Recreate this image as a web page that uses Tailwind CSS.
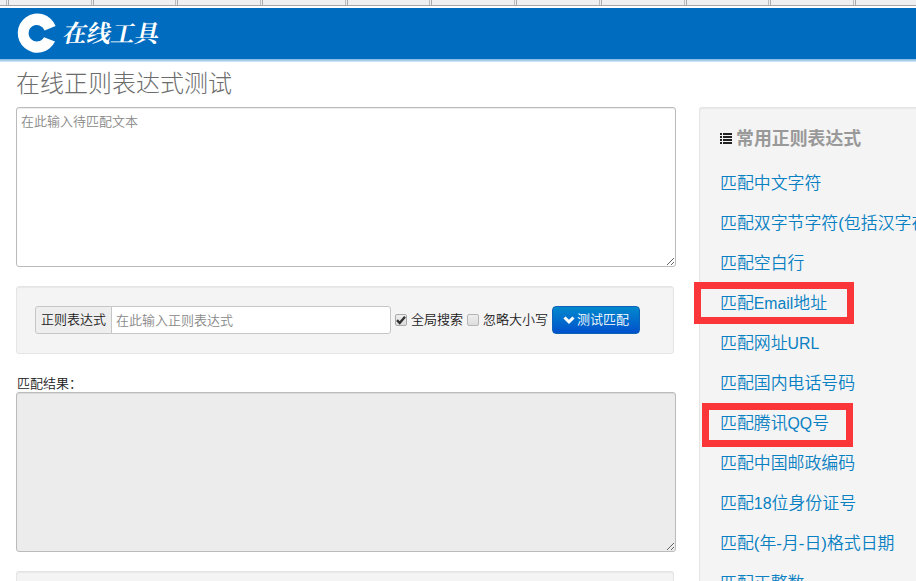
<!DOCTYPE html>
<html lang="zh-CN">
<head>
    <meta charset="UTF-8">
    <meta name="viewport" content="width=device-width, initial-scale=1.0">
    <title>在线正则表达式测试</title>
    <script src="https://cdn.jsdelivr.net/npm/@tailwindcss/browser@4"></script>
</head>
<body class="h-[581px] overflow-hidden bg-white font-['Liberation_Sans','Noto_Sans_CJK_SC',sans-serif] text-[13px] leading-5 font-[350] text-[#222]">

    <!-- Tab strip -->
    <div class="flex h-1.5 overflow-hidden border-b border-[#a5a5ab] bg-[#f0eff0]">
        <div class="w-[9px] shrink-0 border-r border-[#aaa] pr-px"><div class="h-full border-r border-[#bbb]"></div></div>
        <div class="w-[84.7px] shrink-0 border-r border-[#aaa] pr-px"><div class="h-full border-r border-[#bbb]"></div></div>
        <div class="w-[84.7px] shrink-0 border-r border-[#aaa] pr-px"><div class="h-full border-r border-[#bbb]"></div></div>
        <div class="w-[84.7px] shrink-0 border-r border-[#aaa] pr-px"><div class="h-full border-r border-[#bbb]"></div></div>
        <div class="w-[84.7px] shrink-0 border-r border-[#aaa] pr-px"><div class="h-full border-r border-[#bbb]"></div></div>
        <div class="w-[84.7px] shrink-0 border-r border-[#aaa] pr-px"><div class="h-full border-r border-[#bbb]"></div></div>
        <div class="w-[84.7px] shrink-0 border-r border-[#aaa] pr-px"><div class="h-full border-r border-[#bbb]"></div></div>
        <div class="w-[84.7px] shrink-0 border-r border-[#aaa] pr-px"><div class="h-full border-r border-[#bbb]"></div></div>
        <div class="w-[84.7px] shrink-0 border-r border-[#aaa] pr-px"><div class="h-full border-r border-[#bbb]"></div></div>
        <div class="w-[84.7px] shrink-0 border-r border-[#aaa] pr-px"><div class="h-full border-r border-[#bbb]"></div></div>
        <div class="w-[84.7px] shrink-0 border-r border-[#aaa] pr-px"><div class="h-full border-r border-[#bbb]"></div></div>
    </div>

    <!-- Header -->
    <header class="mt-0.5 flex h-[51px] items-center bg-[#006cbf] pl-4">
        <svg class="h-10 w-10 overflow-visible" viewBox="0 0 40 40" fill="#fff">
            <path d="M39.6 12A19.6 19.6 0 1 0 39 27.6L28 23.2A8.2 8.2 0 1 1 28.6 16.6Z" />
        </svg>
        <div class="mb-1 ml-2 -skew-x-12 font-['Noto_Serif_CJK_SC','Noto_Sans_CJK_SC',serif] text-2xl leading-none font-bold text-white">在线工具</div>
    </header>
    <div class="h-[3px] bg-linear-to-b from-[#78b4e3] to-[#dbeaf5]"></div>

    <main class="flex items-start pl-4">
        <!-- Left column -->
        <div class="w-[660px] shrink-0">
            <h1 class="flex h-[45px] items-center pb-px text-2xl font-light text-[#6c6c6c]">在线正则表达式测试</h1>

            <textarea class="block h-40 w-full resize rounded-[3px] border border-[#bbb] bg-white px-1 py-1 shadow-[inset_0_1px_1px_rgba(0,0,0,0.075)] placeholder:text-[#888]" placeholder="在此输入待匹配文本"></textarea>

            <form class="mt-[19px] flex h-[68px] w-[658px] items-center rounded-[3px] border border-[#e5e5e5] bg-[#f4f4f4] pl-[18px] shadow-[inset_0_1px_1px_rgba(0,0,0,0.05)]">
                <span class="flex h-7 w-[77px] items-center justify-center rounded-l-[3px] border border-[#c6c6c6] bg-[#eee]">正则表达式</span>
                <input type="text" class="-ml-px h-7 w-[280px] rounded-r-[3px] border border-[#c6c6c6] bg-white px-1 placeholder:text-[#888]" placeholder="在此输入正则表达式">
                <label class="ml-1 flex items-center whitespace-nowrap">
                    <span class="mr-1 flex h-3 w-3 items-center justify-center rounded-[2px] border border-[#aaa] bg-linear-to-b from-[#eee] to-[#ddd]">
                        <svg class="h-2.5 w-2.5" viewBox="0 0 10 10" fill="none" stroke="#333" stroke-width="2.4"><path d="M1 5.2L3.7 8L9 1.8" /></svg>
                    </span>
                    全局搜索
                </label>
                <label class="ml-1 flex items-center whitespace-nowrap">
                    <span class="mr-1 h-3 w-3 rounded-[2px] border border-[#b5b5b5] bg-linear-to-b from-[#eee] to-[#ddd]"></span>
                    忽略大小写
                </label>
                <button type="button" class="ml-1 flex h-7 w-[88px] items-center justify-center rounded border border-[#0b62b8] bg-linear-to-b from-[#0088cc] to-[#0050cc] text-white">
                    <svg class="mr-0.5 h-2 w-3" viewBox="0 0 12 8" fill="#fff"><path d="M0.4 2.5L2.6 0.4L6 3.7L9.4 0.4L11.6 2.5L6 8Z" /></svg>
                    测试匹配
                </button>
            </form>

            <p class="mt-5 h-[18px] pl-px">匹配结果：</p>
            <textarea readonly class="block h-40 w-full resize rounded-[3px] border border-[#bbb] bg-[#ececec] shadow-[inset_0_1px_1px_rgba(0,0,0,0.075)]"></textarea>

            <div class="mt-[19px] h-[10px] w-[658px] rounded-t-[3px] border border-b-0 border-[#e5e5e5] bg-[#f4f4f4] shadow-[inset_0_1px_1px_rgba(0,0,0,0.05)]"></div>
        </div>

        <!-- Sidebar -->
        <aside class="mt-[45px] ml-[23px] h-[474px] w-[218px] shrink-0 rounded-tl-[3px] border-t border-l border-[#e5e5e5] bg-[#f4f4f4] pt-[11px] pl-5 whitespace-nowrap shadow-[inset_0_1px_1px_rgba(0,0,0,0.05)]">
            <h2 class="flex h-10 items-center text-[17.9px] font-bold text-[#999]">
                <svg class="mr-1 mb-0.5 h-[11px] w-3 shrink-0" viewBox="0 0 12 11" fill="#222" shape-rendering="crispEdges">
                    <path d="M0 0h2v2H0zM3 0h9v2H3zM0 3h2v2H0zM3 3h9v2H3zM0 6h2v2H0zM3 6h9v2H3zM0 9h2v2H0zM3 9h9v2H3z" />
                </svg>
                常用正则表达式
            </h2>
            <ul class="mt-[5px] text-[16.9px] leading-10 text-[#0880c2]">
                <li class="h-10"><a>匹配中文字符</a></li>
                <li class="h-10"><a>匹配双字节字符(包括汉字在内)</a></li>
                <li class="h-10"><a>匹配空白行</a></li>
                <li class="relative h-10">
                    <a>匹配<span class="text-[15.8px]">Email</span>地址</a>
                    <span class="absolute -top-[2px] -left-[26px] h-[42px] w-[160px] border-[7px] border-[#fb3638]"></span>
                </li>
                <li class="h-10"><a>匹配网址<span class="text-[15.8px]">URL</span></a></li>
                <li class="h-10"><a>匹配国内电话号码</a></li>
                <li class="relative h-10">
                    <a>匹配腾讯<span class="text-[15.8px]">QQ</span>号</a>
                    <span class="absolute -top-px -left-[18px] h-11 w-[151px] border-[7px] border-[#fb3638]"></span>
                </li>
                <li class="h-10"><a>匹配中国邮政编码</a></li>
                <li class="h-10"><a>匹配<span class="text-[16px]">18</span>位身份证号</a></li>
                <li class="h-10"><a>匹配(年-月-日)格式日期</a></li>
                <li class="h-10"><a>匹配正整数</a></li>
            </ul>
        </aside>
    </main>
</body>
</html>
